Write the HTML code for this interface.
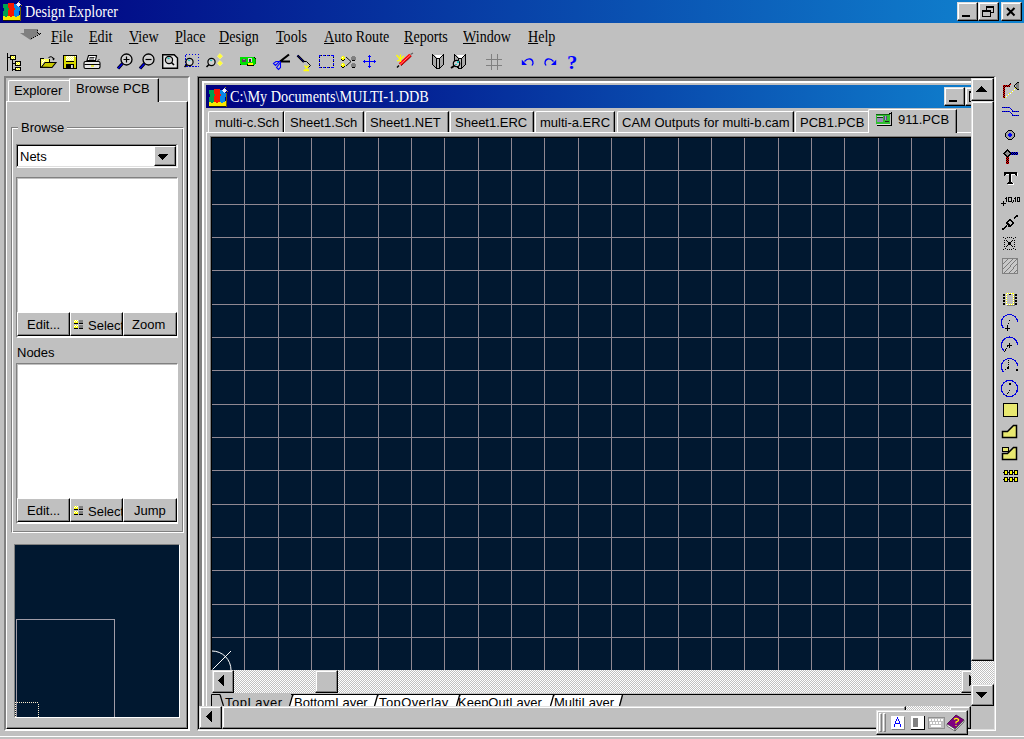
<!DOCTYPE html>
<html><head><meta charset="utf-8">
<style>
*{margin:0;padding:0;box-sizing:border-box}
html,body{width:1024px;height:739px;overflow:hidden;background:#c0c0c0;font-family:"Liberation Sans",sans-serif;font-size:13px;color:#000;position:relative}
.a{position:absolute}
.sf{font-family:"Liberation Serif",serif}
.btn{position:absolute;background:#c0c0c0;border-top:1px solid #fff;border-left:1px solid #fff;border-right:1px solid #000;border-bottom:1px solid #000;box-shadow:inset -1px -1px #808080}
.btn2{position:absolute;background:#c0c0c0;border-top:1px solid #dfdfdf;border-left:1px solid #dfdfdf;border-right:1px solid #000;border-bottom:1px solid #000;box-shadow:inset -1px -1px #808080, inset 1px 1px #fff}
.sunk{position:absolute;border-top:1px solid #808080;border-left:1px solid #808080;border-right:1px solid #fff;border-bottom:1px solid #fff;box-shadow:inset -1px -1px #dfdfdf, inset 1px 1px #000}
.t{position:absolute;white-space:nowrap;line-height:13px;font-size:13px}
.m{position:absolute;white-space:nowrap;line-height:16px;font-size:16px;font-family:"Liberation Serif",serif;transform:scaleX(0.88);transform-origin:0 0}
.m u{text-decoration:underline;text-decoration-thickness:1px;text-underline-offset:1px}
.dith{background-color:#fff;background-image:linear-gradient(45deg,#c0c0c0 25%,transparent 25%,transparent 75%,#c0c0c0 75%),linear-gradient(45deg,#c0c0c0 25%,transparent 25%,transparent 75%,#c0c0c0 75%);background-size:2px 2px;background-position:0 0,1px 1px}
svg{position:absolute;overflow:visible}
</style></head><body>
<!-- ===== TITLE BAR ===== -->
<div class="a" style="left:0;top:0;width:1024px;height:23px;background:linear-gradient(to right,#000080,#1084d0)"></div>
<svg style="left:3px;top:0px" width="20" height="22"><g shape-rendering="crispEdges">
<rect x="0" y="15" width="17" height="5" fill="#f8e800"/>
<rect x="0" y="4" width="5" height="12" fill="#00a050"/><rect x="0" y="8" width="1" height="3" fill="#000080"/><rect x="5" y="8" width="1" height="2" fill="#00a050"/>
<rect x="5" y="3" width="6" height="13" fill="#f81800"/><rect x="5" y="8" width="1" height="2" fill="#00a050"/><rect x="11" y="8" width="1" height="2" fill="#f81800"/>
<rect x="11" y="4" width="5" height="12" fill="#0888e8"/><rect x="11" y="8" width="1" height="2" fill="#f81800"/><rect x="16" y="7" width="1" height="4" fill="#0888e8"/>
<rect x="2" y="15" width="2" height="2" fill="#00a050"/><rect x="7" y="15" width="2" height="2" fill="#f81800"/><rect x="12" y="15" width="2" height="2" fill="#0888e8"/>
<rect x="0" y="20" width="17" height="1" fill="#202000"/><rect x="17" y="7" width="1" height="14" fill="#706000"/>
<rect x="15" y="2" width="1" height="5" fill="#d0d0f0"/><rect x="13" y="4" width="5" height="1" fill="#d0d0f0"/><rect x="14" y="3" width="3" height="3" fill="#f0f0ff"/>
<rect x="16" y="1" width="1" height="1" fill="#a09000"/><rect x="18" y="5" width="1" height="1" fill="#a09000"/>
</g></svg>
<div class="m" style="left:25px;top:3px;color:#fff;font-size:17px;line-height:17px;transform:scaleX(0.83)">Design Explorer</div>
<div class="btn2" style="left:957px;top:2px;width:21px;height:19px"></div>
<div class="btn2" style="left:978px;top:2px;width:21px;height:19px"></div>
<div class="btn2" style="left:1001px;top:2px;width:21px;height:19px"></div>
<svg style="left:957px;top:2px" width="65" height="19" shape-rendering="crispEdges"><g fill="#000">
<rect x="5" y="13" width="8" height="2"/>
<rect x="29" y="4" width="8" height="2"/><rect x="36" y="6" width="1" height="5"/><rect x="33" y="10" width="4" height="1"/><rect x="29" y="6" width="1" height="2"/>
<rect x="25" y="8" width="9" height="2"/><rect x="25" y="10" width="1" height="5"/><rect x="33" y="10" width="1" height="5"/><rect x="25" y="14" width="9" height="1"/>
</g><path d="M50 6l7.5 7.5M57.5 6L50 13.5" stroke="#000" stroke-width="2" shape-rendering="auto"/></svg>

<!-- ===== MENU ===== -->
<svg style="left:0;top:0" width="50" height="50"><path d="M24 29H38V33H41L30.5 40L20 33H24Z" fill="#808080"/>
<g fill="#000" shape-rendering="crispEdges"><rect x="37" y="30" width="1" height="1"/><rect x="37" y="32" width="1" height="1"/><rect x="38" y="33" width="1" height="1"/><rect x="39" y="34" width="1" height="1"/><rect x="40" y="33" width="1" height="1"/><rect x="37" y="35" width="1" height="1"/><rect x="35" y="36" width="1" height="1"/><rect x="33" y="37" width="1" height="1"/><rect x="31" y="38" width="1" height="1"/></g></svg>
<div class="m" style="left:51px;top:29px"><u>F</u>ile</div>
<div class="m" style="left:89px;top:29px"><u>E</u>dit</div>
<div class="m" style="left:129px;top:29px"><u>V</u>iew</div>
<div class="m" style="left:175px;top:29px"><u>P</u>lace</div>
<div class="m" style="left:219px;top:29px"><u>D</u>esign</div>
<div class="m" style="left:276px;top:29px"><u>T</u>ools</div>
<div class="m" style="left:324px;top:29px"><u>A</u>uto Route</div>
<div class="m" style="left:404px;top:29px"><u>R</u>eports</div>
<div class="m" style="left:463px;top:29px"><u>W</u>indow</div>
<div class="m" style="left:528px;top:29px"><u>H</u>elp</div>
<!-- ===== TOOLBAR ===== -->
<svg style="left:0;top:50px" width="600" height="24" shape-rendering="crispEdges">
<!-- tree icon -->
<g shape-rendering="crispEdges"><rect x="7" y="3" width="1" height="18" fill="#000"/><rect x="8" y="7" width="3" height="1" fill="#000"/><rect x="12" y="10" width="1" height="11" fill="#000"/><rect x="13" y="13" width="2" height="1" fill="#000"/><rect x="13" y="19" width="2" height="1" fill="#000"/><rect x="10" y="5" width="6" height="5" fill="#000"/><rect x="11" y="6" width="4" height="3" fill="#ffff00"/><rect x="12" y="6" width="1" height="1" fill="#ffffd0"/><rect x="14" y="6" width="1" height="1" fill="#ffffd0"/><rect x="11" y="7" width="1" height="1" fill="#ffffd0"/><rect x="13" y="7" width="1" height="1" fill="#ffffd0"/><rect x="12" y="8" width="1" height="1" fill="#ffffd0"/><rect x="14" y="8" width="1" height="1" fill="#ffffd0"/><rect x="15" y="11" width="6" height="5" fill="#000"/><rect x="16" y="12" width="4" height="3" fill="#ffff00"/><rect x="16" y="12" width="1" height="1" fill="#ffffd0"/><rect x="18" y="12" width="1" height="1" fill="#ffffd0"/><rect x="17" y="13" width="1" height="1" fill="#ffffd0"/><rect x="19" y="13" width="1" height="1" fill="#ffffd0"/><rect x="16" y="14" width="1" height="1" fill="#ffffd0"/><rect x="18" y="14" width="1" height="1" fill="#ffffd0"/><rect x="15" y="17" width="6" height="4" fill="#000"/><rect x="16" y="18" width="4" height="2" fill="#ffff00"/><rect x="16" y="18" width="1" height="1" fill="#ffffd0"/><rect x="18" y="18" width="1" height="1" fill="#ffffd0"/><rect x="17" y="19" width="1" height="1" fill="#ffffd0"/><rect x="19" y="19" width="1" height="1" fill="#ffffd0"/></g>
<!-- open folder -->
<g transform="translate(0,-50)" shape-rendering="crispEdges">
<path d="M40.5 58.5h3l1 1h5v3" fill="none" stroke="#000"/>
<rect x="41" y="59" width="8" height="8" fill="#ffff60"/>
<g fill="#fff"><rect x="42" y="60" width="1" height="1"/><rect x="44" y="60" width="1" height="1"/><rect x="43" y="61" width="1" height="1"/><rect x="42" y="62" width="1" height="1"/><rect x="44" y="62" width="1" height="1"/><rect x="43" y="63" width="1" height="1"/><rect x="42" y="64" width="1" height="1"/></g>
<rect x="40" y="58" width="1" height="10" fill="#000"/><rect x="40" y="67" width="12" height="1" fill="#000"/>
</g>
<g transform="translate(0,-50)" shape-rendering="auto">
<path d="M41.5 67L45 62.5H56L52 67.5Z" fill="#c8c800" stroke="#000" stroke-width="1.1"/>
<path d="M48.5 57.5q2.5-2 5 0.5v1.5" fill="none" stroke="#000" stroke-width="1"/>
<path d="M52 58.5h3l-1.5 2z" fill="#000"/>
</g>
<!-- save -->
<g transform="translate(0,-50)" shape-rendering="crispEdges">
<rect x="63" y="55" width="14" height="14" fill="#000"/>
<rect x="64" y="56" width="12" height="12" fill="#d8d800"/>
<rect x="66" y="56" width="8" height="5" fill="#ffff80"/>
<g fill="#fff"><rect x="67" y="56" width="1" height="1"/><rect x="69" y="56" width="1" height="1"/><rect x="71" y="56" width="1" height="1"/><rect x="73" y="56" width="1" height="1"/><rect x="66" y="57" width="1" height="1"/><rect x="68" y="57" width="1" height="1"/><rect x="70" y="57" width="1" height="1"/><rect x="72" y="57" width="1" height="1"/><rect x="67" y="58" width="1" height="1"/><rect x="69" y="58" width="1" height="1"/><rect x="71" y="58" width="1" height="1"/><rect x="73" y="58" width="1" height="1"/><rect x="66" y="59" width="1" height="1"/><rect x="68" y="59" width="1" height="1"/><rect x="70" y="59" width="1" height="1"/><rect x="72" y="59" width="1" height="1"/></g>
<rect x="66" y="61" width="8" height="1" fill="#000"/>
<rect x="66" y="64" width="8" height="5" fill="#000"/><rect x="72" y="65" width="1" height="3" fill="#c0c0c0"/><rect x="71" y="65" width="1" height="3" fill="#e0e0e0"/>
<rect x="75" y="56" width="1" height="1" fill="#fff"/>
</g>
<!-- printer -->
<g transform="translate(0,-50)" shape-rendering="auto">
<path d="M88.5 55.5h8l-1 5h-8.5z" fill="#fff" stroke="#000" stroke-width="1.1"/>
<path d="M89.5 57.5h5M89 59h5" stroke="#000" stroke-width="0.8"/>
<path d="M85.5 61.5h13q1.5 0 1.5 1.5v4q0 1.5-1.5 1.5h-13q-1.5 0-1.5-1.5v-4q0-1.5 1.5-1.5z" fill="#e8e8e8" stroke="#000" stroke-width="1.1"/>
<path d="M84.5 64.5h15.5" stroke="#000" stroke-width="1"/>
<path d="M91 66h3" stroke="#e0e000" stroke-width="1.3"/>
<path d="M97.5 61l2-2M98.5 68.5l1.5-1.5" stroke="#000" stroke-width="0.8"/>
</g>
<!-- zoom in 118..133 y54..70 -->
<g transform="translate(0,-50)" shape-rendering="auto">
<circle cx="126.5" cy="59.5" r="5.5" fill="#d0d0d0" stroke="#000" stroke-width="1.3"/>
<path d="M123.5 59.5h6M126.5 56.5v6" stroke="#000" stroke-width="1.2"/>
<path d="M122.5 63.5l-4.5 5" stroke="#000" stroke-width="3.2"/><path d="M122.3 63.7l-4.3 4.8" stroke="#0000e0" stroke-width="1.6"/>
<circle cx="148.5" cy="59.5" r="5.5" fill="#d0d0d0" stroke="#000" stroke-width="1.3"/>
<path d="M145.5 59.5h6" stroke="#000" stroke-width="1.2"/>
<path d="M144.5 63.5l-4.5 5" stroke="#000" stroke-width="3.2"/><path d="M144.3 63.7l-4.3 4.8" stroke="#0000e0" stroke-width="1.6"/>
</g>
<!-- zoom doc 162..178 y54..68 -->
<g transform="translate(0,-50)" shape-rendering="auto">
<path d="M162.7 54.7h11.5l3.3 3.3v10.3h-14.8z" fill="#e4e4e4" stroke="#000" stroke-width="1.4"/>
<circle cx="169" cy="60" r="3.6" fill="#d0d0d0" stroke="#000" stroke-width="1.2"/>
<path d="M167.5 58.3a2 2 0 0 1 2 0.5" stroke="#20c0c0" stroke-width="1.4" fill="none"/>
<path d="M171.5 62.5l2.5 2.5" stroke="#000" stroke-width="1.6"/>
</g>
<!-- zoom area 184..199 -->
<g transform="translate(0,-50)" shape-rendering="auto">
<rect x="185.5" y="54.5" width="13" height="12" fill="none" stroke="#0000e0" stroke-dasharray="1.5 1.5" shape-rendering="crispEdges"/>
<circle cx="189.5" cy="62" r="3.6" fill="#d0d0d0" stroke="#000" stroke-width="1.2"/>
<path d="M188 60.3a2 2 0 0 1 2 0.5" stroke="#20c0c0" stroke-width="1.4" fill="none"/>
<path d="M187 64.5l-2.5 2.5" stroke="#000" stroke-width="1.6"/>
</g>
<!-- zoom selected 206..223 -->
<g transform="translate(0,-50)" shape-rendering="auto">
<circle cx="211.5" cy="62" r="3.6" fill="#d0d0d0" stroke="#000" stroke-width="1.2"/>
<path d="M210 60.3a2 2 0 0 1 2 0.5" stroke="#20c0c0" stroke-width="1.4" fill="none"/>
<path d="M209 64.5l-2.5 2.5" stroke="#000" stroke-width="1.6"/>
<path d="M220 53.5l2.7 2.7-2.7 2.7-2.7-2.7zM220 60.5l2.7 2.7-2.7 2.7-2.7-2.7z" fill="#ffff30" stroke="#fff8a0" stroke-width="0.6"/>
</g>
<!-- green pcb -->
<g shape-rendering="crispEdges"><rect x="240" y="7" width="15" height="8" fill="#00e000"/><rect x="240" y="14" width="15" height="0" fill="#000"/><rect x="242" y="9" width="4" height="3" fill="#604060"/><rect x="243" y="9" width="2" height="1" fill="#a080a0"/><rect x="248" y="8" width="4" height="4" fill="#e0d0e0"/><rect x="249" y="9" width="2" height="3" fill="#303030"/><rect x="248" y="13" width="5" height="2" fill="#ffff00"/><rect x="247" y="15" width="7" height="1" fill="#000"/><rect x="247" y="14" width="1" height="1" fill="#000"/><rect x="240" y="14" width="1" height="1" fill="#000"/><rect x="254" y="7" width="1" height="1" fill="#000"/><rect x="255" y="8" width="1" height="1" fill="#000"/><rect x="255" y="9" width="1" height="5" fill="#00a000"/></g>
<!-- scissors 273..290 y54..70 -->
<g transform="translate(0,-50)" shape-rendering="auto">
<path d="M280 61.5L289 54.5M280 61.5H290" stroke="#000" stroke-width="2.2" fill="none"/>
<path d="M273.5 63.5L276 61.5H279.5L275.5 65.5Z" fill="none" stroke="#0000ff" stroke-width="1.1"/>
<path d="M276.5 67.5L280.5 62.5V67.5L278.5 69.5Z" fill="none" stroke="#0000ff" stroke-width="1.1"/>
</g>
<!-- paste brush 297..311 -->
<g transform="translate(0,-50)" shape-rendering="auto">
<path d="M297.5 55.5L304 62" stroke="#000" stroke-width="2.4"/><path d="M297.5 55.5L304 62" stroke="#0000d0" stroke-width="1" stroke-dasharray="1.2 0.6"/>
<path d="M304 61.5H306.5L310.5 65.5L308.5 67.5" fill="none" stroke="#000" stroke-width="1"/>
<path d="M304.5 65.5L308.5 70.5M308.5 65.5L304.5 70.5M303.5 70.5H309" stroke="#ffff00" stroke-width="1.3"/>
</g>
<!-- dotted box / deselect / move -->
<g shape-rendering="crispEdges"><rect x="319" y="5" width="1" height="1" fill="#0000ff"/><rect x="319" y="17" width="1" height="1" fill="#0000ff"/><rect x="320" y="5" width="1" height="1" fill="#0000ff"/><rect x="320" y="17" width="1" height="1" fill="#0000ff"/><rect x="321" y="5" width="1" height="1" fill="#000"/><rect x="321" y="17" width="1" height="1" fill="#000"/><rect x="323" y="5" width="1" height="1" fill="#0000ff"/><rect x="323" y="17" width="1" height="1" fill="#0000ff"/><rect x="324" y="5" width="1" height="1" fill="#0000ff"/><rect x="324" y="17" width="1" height="1" fill="#0000ff"/><rect x="325" y="5" width="1" height="1" fill="#000"/><rect x="325" y="17" width="1" height="1" fill="#000"/><rect x="327" y="5" width="1" height="1" fill="#0000ff"/><rect x="327" y="17" width="1" height="1" fill="#0000ff"/><rect x="328" y="5" width="1" height="1" fill="#0000ff"/><rect x="328" y="17" width="1" height="1" fill="#0000ff"/><rect x="329" y="5" width="1" height="1" fill="#000"/><rect x="329" y="17" width="1" height="1" fill="#000"/><rect x="331" y="5" width="1" height="1" fill="#0000ff"/><rect x="331" y="17" width="1" height="1" fill="#0000ff"/><rect x="332" y="5" width="1" height="1" fill="#0000ff"/><rect x="332" y="17" width="1" height="1" fill="#0000ff"/><rect x="333" y="5" width="1" height="1" fill="#000"/><rect x="333" y="17" width="1" height="1" fill="#000"/><rect x="319" y="5" width="1" height="1" fill="#0000ff"/><rect x="333" y="5" width="1" height="1" fill="#0000ff"/><rect x="319" y="6" width="1" height="1" fill="#0000ff"/><rect x="333" y="6" width="1" height="1" fill="#0000ff"/><rect x="319" y="7" width="1" height="1" fill="#000"/><rect x="333" y="7" width="1" height="1" fill="#000"/><rect x="319" y="9" width="1" height="1" fill="#0000ff"/><rect x="333" y="9" width="1" height="1" fill="#0000ff"/><rect x="319" y="10" width="1" height="1" fill="#0000ff"/><rect x="333" y="10" width="1" height="1" fill="#0000ff"/><rect x="319" y="11" width="1" height="1" fill="#000"/><rect x="333" y="11" width="1" height="1" fill="#000"/><rect x="319" y="13" width="1" height="1" fill="#0000ff"/><rect x="333" y="13" width="1" height="1" fill="#0000ff"/><rect x="319" y="14" width="1" height="1" fill="#0000ff"/><rect x="333" y="14" width="1" height="1" fill="#0000ff"/><rect x="319" y="15" width="1" height="1" fill="#000"/><rect x="333" y="15" width="1" height="1" fill="#000"/><rect x="319" y="17" width="1" height="1" fill="#0000ff"/><rect x="333" y="17" width="1" height="1" fill="#0000ff"/><rect x="341" y="7" width="4" height="3" fill="#ffff00"/><rect x="342" y="6" width="2" height="1" fill="#ffff00"/><rect x="342" y="10" width="2" height="1" fill="#000"/><rect x="341" y="9" width="1" height="1" fill="#000"/><rect x="344" y="9" width="1" height="1" fill="#000"/><rect x="342" y="7" width="1" height="1" fill="#fff"/><rect x="352" y="6" width="3" height="5" fill="#808080"/><rect x="351" y="7" width="5" height="3" fill="#808080"/><rect x="352" y="10" width="3" height="1" fill="#000"/><rect x="341" y="14" width="4" height="3" fill="#ffff00"/><rect x="342" y="13" width="2" height="1" fill="#ffff00"/><rect x="342" y="17" width="2" height="1" fill="#000"/><rect x="341" y="16" width="1" height="1" fill="#000"/><rect x="344" y="16" width="1" height="1" fill="#000"/><rect x="342" y="14" width="1" height="1" fill="#fff"/><rect x="352" y="13" width="3" height="5" fill="#808080"/><rect x="351" y="14" width="5" height="3" fill="#808080"/><rect x="352" y="17" width="3" height="1" fill="#000"/></g><g transform="translate(0,-50)" shape-rendering="auto"><path d="M346 57l5 4.5-5 4.5" fill="none" stroke="#000" stroke-width="0.9"/></g>
<!-- move cross 363..376 y55..68 -->
<g transform="translate(0,-50)" shape-rendering="crispEdges">
<rect x="363" y="61" width="13" height="1" fill="#0000ff"/><rect x="369" y="55" width="1" height="13" fill="#0000ff"/>
<rect x="368" y="56" width="3" height="1" fill="#0000ff"/><rect x="368" y="66" width="3" height="1" fill="#0000ff"/>
<rect x="364" y="60" width="1" height="3" fill="#0000ff"/><rect x="374" y="60" width="1" height="3" fill="#0000ff"/>
</g>
<!-- pencil 396..412 y53..68 -->
<g transform="translate(0,-50)" shape-rendering="auto">
<path d="M400 64.5L410.5 55" stroke="#ff0000" stroke-width="3.6"/>
<path d="M400 64.5L410.5 55" stroke="#fff" stroke-width="1" stroke-dasharray="0.7 0.7"/>
<path d="M401.2 65.7L411.2 56.5" stroke="#000" stroke-width="0.9" stroke-dasharray="0.8 0.8"/>
<path d="M397 67.5L399 65.5" stroke="#000" stroke-width="1.4"/>
<path d="M410.5 54.5l2.5-1.5" stroke="#606060" stroke-width="1.2"/>
<path d="M400.5 59.5L396.5 55M400.5 59.5V54.5M400.5 59.5L404 56M400.5 59.5L397 61M400.5 59.5V62" stroke="#ffff00" stroke-width="1.3"/>
</g>
<!-- library 432..444 y54..68 -->
<g transform="translate(432,4)">
<path d="M0.5 0.5V10.5L4.5 14.5H7.5L11.5 10.5V0.5L7.5 4.5H4.5Z" fill="#a8a8a8" stroke="#000" stroke-width="1.3"/>
<path d="M1.5 0.5H10.5L7 4H5Z" fill="#fff"/>
<rect x="4.5" y="4.5" width="3" height="10" fill="#b8b8b8" stroke="#000" stroke-width="1.3"/>
</g>
<g transform="translate(454,4)">
<path d="M0.5 0.5V10.5L4.5 14.5H7.5L11.5 10.5V0.5L7.5 4.5H4.5Z" fill="#a8a8a8" stroke="#000" stroke-width="1.3"/>
<path d="M1.5 0.5H10.5L7 4H5Z" fill="#fff"/>
<rect x="4.5" y="4.5" width="3" height="10" fill="#b8b8b8" stroke="#000" stroke-width="1.3"/>
<circle cx="2.5" cy="9.5" r="3.2" fill="#d0d0d0" stroke="#000" stroke-width="1.2" shape-rendering="auto"/>
<rect x="3" y="7" width="2" height="2" fill="#20c0c0"/><rect x="1" y="10" width="2" height="1" fill="#20c0c0"/>
<path d="M0 12l-3 2" stroke="#000" stroke-width="2" shape-rendering="auto"/>
</g>
<!-- grid 486..502 y54..70 -->
<g transform="translate(486,4)">
<rect x="5" y="0" width="1" height="16" fill="#808080"/><rect x="11" y="0" width="1" height="16" fill="#808080"/>
<rect x="0" y="5" width="16" height="1" fill="#808080"/><rect x="0" y="11" width="16" height="1" fill="#808080"/>
</g>
<!-- undo/redo/help -->
<g transform="translate(0,-50)" shape-rendering="auto">
<path d="M524.5 61.5Q527 58.5 530 59T533 63.5L532 65.5" fill="none" stroke="#0000ff" stroke-width="1.3"/>
<path d="M521.8 59.7V65H527Z" fill="#0000ff"/>
<path d="M553.5 61.5Q551 58.5 548 59T545 63.5L546 65.5" fill="none" stroke="#0000ff" stroke-width="1.3"/>
<path d="M556.2 59.7V65H551Z" fill="#0000ff"/>
</g>
<text x="567" y="19" font-family="Liberation Serif" font-weight="bold" font-size="18" fill="#0000ff" transform="translate(567,0) scale(1.15,1) translate(-567,0)">?</text>
</svg>
<!-- ===== LEFT PANEL ===== -->
<div class="a" style="left:4px;top:76px;width:186px;height:655px;border-top:2px solid #808080;border-left:2px solid #808080;border-right:2px solid #fff;border-bottom:2px solid #fff"></div>
<div class="a" style="left:6px;top:101px;width:182px;height:628px;border-top:1px solid #fff;border-left:1px solid #fff;border-right:1px solid #000;border-bottom:1px solid #000;box-shadow:inset -1px -1px #808080"></div>
<!-- inactive tab Explorer -->
<div class="a" style="left:8px;top:80px;width:61px;height:21px;border-top:1px solid #fff;border-left:1px solid #fff;border-top-left-radius:2px"></div>
<div class="t" style="left:14px;top:84px">Explorer</div>
<!-- active tab Browse PCB -->
<div class="a" style="left:69px;top:78px;width:90px;height:24px;background:#c0c0c0;border-top:1px solid #fff;border-left:1px solid #fff;border-right:1px solid #000;box-shadow:inset -1px 0 #808080;border-top-left-radius:2px;border-top-right-radius:1px"></div>
<div class="t" style="left:76px;top:82px">Browse PCB</div>

<!-- group box Browse -->
<div class="a" style="left:11px;top:127px;width:173px;height:406px;border-top:1px solid #808080;border-left:1px solid #808080;border-right:1px solid #fff;border-bottom:1px solid #fff;box-shadow:inset 1px 1px #fff, inset -1px -1px #808080"></div>
<div class="t" style="left:18px;top:121px;background:#c0c0c0;padding:0 3px 0 3px">Browse</div>
<!-- combo -->
<div class="sunk" style="left:16px;top:144px;width:162px;height:24px;background:#fff"></div>
<div class="t" style="left:20px;top:150px">Nets</div>
<div class="btn" style="left:154px;top:146px;width:22px;height:20px"></div>
<svg style="left:0;top:0" width="200" height="200" shape-rendering="crispEdges"><path d="M159 154h9v1h-1v1h-1v1h-1v1h-1v1h-1v1h-1v-1h-1v-1h-1v-1h-1v-1h-1z" fill="#000"/></svg>
<!-- listbox 1 -->
<div class="a" style="left:16px;top:177px;width:162px;height:161px;background:#fff;border-top:1px solid #808080;border-left:1px solid #808080;border-right:1px solid #fff;border-bottom:1px solid #fff;box-shadow:inset 1px 1px #c0c0c0"></div>
<div class="btn" style="left:17px;top:312px;width:53px;height:24px"></div>
<div class="btn" style="left:70px;top:312px;width:53px;height:24px"></div>
<div class="btn" style="left:123px;top:312px;width:54px;height:24px"></div>
<div class="t" style="left:27px;top:318px">Edit...</div>
<div class="a" style="left:71px;top:313px;width:51px;height:23px;overflow:hidden"><div class="t" style="left:17px;top:6px">Select</div></div>
<svg style="left:0;top:0" width="100" height="739" shape-rendering="crispEdges"><rect x="74" y="320" width="4" height="3" fill="#ffff00"/><rect x="75" y="320" width="1" height="1" fill="#fff"/><rect x="77" y="320" width="1" height="1" fill="#fff"/><rect x="74" y="321" width="1" height="1" fill="#fff"/><rect x="76" y="321" width="1" height="1" fill="#fff"/><rect x="74" y="323" width="4" height="1" fill="#000"/><rect x="79" y="320" width="4" height="3" fill="#808080"/><rect x="79" y="323" width="4" height="1" fill="#000"/><rect x="74" y="325" width="4" height="3" fill="#ffff00"/><rect x="75" y="325" width="1" height="1" fill="#fff"/><rect x="77" y="325" width="1" height="1" fill="#fff"/><rect x="74" y="326" width="1" height="1" fill="#fff"/><rect x="76" y="326" width="1" height="1" fill="#fff"/><rect x="74" y="328" width="4" height="1" fill="#000"/><rect x="79" y="325" width="4" height="3" fill="#808080"/><rect x="79" y="328" width="4" height="1" fill="#000"/></svg>
<div class="t" style="left:132px;top:318px">Zoom</div>
<div class="t" style="left:17px;top:346px">Nodes</div>
<div class="a" style="left:16px;top:363px;width:162px;height:161px;background:#fff;border-top:1px solid #808080;border-left:1px solid #808080;border-right:1px solid #fff;border-bottom:1px solid #fff;box-shadow:inset 1px 1px #c0c0c0"></div>
<div class="btn" style="left:17px;top:498px;width:53px;height:24px"></div>
<div class="btn" style="left:70px;top:498px;width:53px;height:24px"></div>
<div class="btn" style="left:123px;top:498px;width:54px;height:24px"></div>
<div class="t" style="left:27px;top:504px">Edit...</div>
<div class="a" style="left:71px;top:499px;width:51px;height:23px;overflow:hidden"><div class="t" style="left:17px;top:6px">Select</div></div>
<svg style="left:0;top:0" width="100" height="739" shape-rendering="crispEdges"><rect x="74" y="506" width="4" height="3" fill="#ffff00"/><rect x="75" y="506" width="1" height="1" fill="#fff"/><rect x="77" y="506" width="1" height="1" fill="#fff"/><rect x="74" y="507" width="1" height="1" fill="#fff"/><rect x="76" y="507" width="1" height="1" fill="#fff"/><rect x="74" y="509" width="4" height="1" fill="#000"/><rect x="79" y="506" width="4" height="3" fill="#808080"/><rect x="79" y="509" width="4" height="1" fill="#000"/><rect x="74" y="511" width="4" height="3" fill="#ffff00"/><rect x="75" y="511" width="1" height="1" fill="#fff"/><rect x="77" y="511" width="1" height="1" fill="#fff"/><rect x="74" y="512" width="1" height="1" fill="#fff"/><rect x="76" y="512" width="1" height="1" fill="#fff"/><rect x="74" y="514" width="4" height="1" fill="#000"/><rect x="79" y="511" width="4" height="3" fill="#808080"/><rect x="79" y="514" width="4" height="1" fill="#000"/></svg>
<div class="t" style="left:134px;top:504px">Jump</div>
<!-- minimap -->
<div class="a" style="left:14px;top:544px;width:166px;height:174px;background:#011830;border-top:1px solid #808080;border-left:1px solid #808080;border-right:1px solid #fff;border-bottom:1px solid #fff"></div>
<svg style="left:0;top:0" width="200" height="739" shape-rendering="crispEdges">
<path d="M16.5 717V619.5H114.5V717" fill="none" stroke="#a09ca8"/>
<path d="M15.5 717V702.5H37.5l1 1V717" fill="none" stroke="#fff0d0" stroke-dasharray="1 1"/>
</svg>
<!-- ===== MDI ===== -->
<div class="a" style="left:197px;top:76px;width:799px;height:655px;border-top:1px solid #808080;border-left:1px solid #808080;border-right:1px solid #fff;border-bottom:1px solid #fff;box-shadow:inset -1px -1px #dfdfdf, inset 1px 1px #000"></div>
<div class="a" style="left:0;top:0;width:1024px;height:739px;clip-path:inset(78px 30px 10px 199px)">
<!-- child frame -->
<div class="a" style="left:199px;top:78px;width:800px;height:700px;border-top:3px solid #808080;border-left:3px solid #808080;box-shadow:inset 2px 2px #fff"></div>
<!-- doc title -->
<div class="a" style="left:206px;top:85px;width:804px;height:23px;background:linear-gradient(to right,#000080,#1084d0)"></div>
<svg style="left:209px;top:86px" width="20" height="22"><g shape-rendering="crispEdges">
<rect x="0" y="15" width="17" height="5" fill="#f8e800"/>
<rect x="0" y="4" width="5" height="12" fill="#00a050"/><rect x="0" y="8" width="1" height="3" fill="#000080"/><rect x="5" y="8" width="1" height="2" fill="#00a050"/>
<rect x="5" y="3" width="6" height="13" fill="#f81800"/><rect x="5" y="8" width="1" height="2" fill="#00a050"/><rect x="11" y="8" width="1" height="2" fill="#f81800"/>
<rect x="11" y="4" width="5" height="12" fill="#0888e8"/><rect x="11" y="8" width="1" height="2" fill="#f81800"/><rect x="16" y="7" width="1" height="4" fill="#0888e8"/>
<rect x="2" y="15" width="2" height="2" fill="#00a050"/><rect x="7" y="15" width="2" height="2" fill="#f81800"/><rect x="12" y="15" width="2" height="2" fill="#0888e8"/>
<rect x="0" y="20" width="17" height="1" fill="#202000"/><rect x="17" y="7" width="1" height="14" fill="#706000"/>
<rect x="15" y="2" width="1" height="5" fill="#d0d0f0"/><rect x="13" y="4" width="5" height="1" fill="#d0d0f0"/><rect x="14" y="3" width="3" height="3" fill="#f0f0ff"/>
<rect x="16" y="1" width="1" height="1" fill="#a09000"/><rect x="18" y="5" width="1" height="1" fill="#a09000"/>
</g></svg>
<div class="m" style="left:230px;top:89px;color:#fff;font-size:16px;line-height:16px;transform:scaleX(0.89)">C:\My Documents\MULTI-1.DDB</div>
<div class="btn2" style="left:944px;top:87px;width:21px;height:19px"></div>
<div class="btn2" style="left:965px;top:87px;width:21px;height:19px"></div>
<svg style="left:944px;top:87px" width="30" height="19" shape-rendering="crispEdges"><rect x="5" y="13" width="8" height="2" fill="#000"/><rect x="25" y="4" width="1" height="11" fill="#000"/><rect x="25" y="4" width="5" height="2" fill="#000"/><rect x="25" y="14" width="5" height="1" fill="#000"/></svg>

<!-- doc tabs -->
<div class="a" style="left:206px;top:132px;width:765px;height:1px;background:#fff"></div>
<div class="a" style="left:206px;top:132px;width:1px;height:600px;background:#fff"></div>
<div class="a" style="left:208px;top:111px;width:76px;height:21px;border-top:1px solid #fff;border-left:1px solid #fff;border-right:1px solid #000;box-shadow:inset -1px 0 #808080;border-top-left-radius:2px"></div>
<div class="t" style="left:215px;top:116px">multi-c.Sch</div>
<div class="a" style="left:284px;top:111px;width:80px;height:21px;border-top:1px solid #fff;border-left:1px solid #fff;border-right:1px solid #000;box-shadow:inset -1px 0 #808080;border-top-left-radius:2px"></div>
<div class="t" style="left:290px;top:116px">Sheet1.Sch</div>
<div class="a" style="left:365px;top:111px;width:84px;height:21px;border-top:1px solid #fff;border-left:1px solid #fff;border-right:1px solid #000;box-shadow:inset -1px 0 #808080;border-top-left-radius:2px"></div>
<div class="t" style="left:370px;top:116px">Sheet1.NET</div>
<div class="a" style="left:450px;top:111px;width:84px;height:21px;border-top:1px solid #fff;border-left:1px solid #fff;border-right:1px solid #000;box-shadow:inset -1px 0 #808080;border-top-left-radius:2px"></div>
<div class="t" style="left:455px;top:116px">Sheet1.ERC</div>
<div class="a" style="left:535px;top:111px;width:80px;height:21px;border-top:1px solid #fff;border-left:1px solid #fff;border-right:1px solid #000;box-shadow:inset -1px 0 #808080;border-top-left-radius:2px"></div>
<div class="t" style="left:540px;top:116px">multi-a.ERC</div>
<div class="a" style="left:617px;top:111px;width:177px;height:21px;border-top:1px solid #fff;border-left:1px solid #fff;border-right:1px solid #000;box-shadow:inset -1px 0 #808080;border-top-left-radius:2px"></div>
<div class="t" style="left:622px;top:116px">CAM Outputs for multi-b.cam</div>
<div class="a" style="left:795px;top:111px;width:75px;height:21px;border-top:1px solid #fff;border-left:1px solid #fff;border-right:1px solid #000;box-shadow:inset -1px 0 #808080;border-top-left-radius:2px"></div>
<div class="t" style="left:800px;top:116px">PCB1.PCB</div>
<div class="a" style="left:868px;top:109px;width:89px;height:24px;background:#c0c0c0;border-top:1px solid #fff;border-left:1px solid #fff;border-right:1px solid #000;box-shadow:inset -1px 0 #808080;border-top-left-radius:2px"></div>
<svg style="left:0;top:0" width="1024" height="200" shape-rendering="crispEdges">
<rect x="876" y="114" width="14" height="10" fill="#30c030"/><rect x="876" y="114" width="14" height="1" fill="#106010"/>
<rect x="877" y="116" width="6" height="1" fill="#d0c8d8"/>
<rect x="877" y="118" width="6" height="4" fill="#9888b8"/><rect x="877" y="117" width="6" height="1" fill="#104010"/>
<rect x="884" y="116" width="1" height="4" fill="#5a4a80"/><rect x="886" y="116" width="1" height="4" fill="#5a4a80"/><rect x="885" y="116" width="1" height="4" fill="#a898c8"/>
<rect x="885" y="121" width="4" height="1" fill="#202020"/>
<rect x="877" y="124" width="13" height="1" fill="#e8e0e8"/>
<rect x="877" y="125" width="15" height="1" fill="#000"/><rect x="891" y="112" width="1" height="14" fill="#000"/>
<rect x="889" y="113" width="2" height="1" fill="#000"/>
</svg>
<div class="t" style="left:898px;top:113px">911.PCB</div>

<!-- canvas -->
<div class="a" style="left:210px;top:136px;width:761px;height:534px;background:#011830;border-top:1px solid #808080;border-left:1px solid #808080;box-shadow:inset 1px 1px #000"></div>
<svg style="left:0;top:0" width="1024" height="739" shape-rendering="crispEdges">
<g fill="#908892">
<rect x="244" y="138" width="1" height="532"/>
<rect x="278" y="138" width="1" height="532"/>
<rect x="311" y="138" width="1" height="532"/>
<rect x="344" y="138" width="1" height="532"/>
<rect x="378" y="138" width="1" height="532"/>
<rect x="411" y="138" width="1" height="532"/>
<rect x="444" y="138" width="1" height="532"/>
<rect x="478" y="138" width="1" height="532"/>
<rect x="511" y="138" width="1" height="532"/>
<rect x="544" y="138" width="1" height="532"/>
<rect x="578" y="138" width="1" height="532"/>
<rect x="611" y="138" width="1" height="532"/>
<rect x="644" y="138" width="1" height="532"/>
<rect x="678" y="138" width="1" height="532"/>
<rect x="711" y="138" width="1" height="532"/>
<rect x="744" y="138" width="1" height="532"/>
<rect x="778" y="138" width="1" height="532"/>
<rect x="811" y="138" width="1" height="532"/>
<rect x="844" y="138" width="1" height="532"/>
<rect x="878" y="138" width="1" height="532"/>
<rect x="911" y="138" width="1" height="532"/>
<rect x="944" y="138" width="1" height="532"/>
<rect x="212" y="170" width="759" height="1"/>
<rect x="212" y="204" width="759" height="1"/>
<rect x="212" y="237" width="759" height="1"/>
<rect x="212" y="270" width="759" height="1"/>
<rect x="212" y="304" width="759" height="1"/>
<rect x="212" y="337" width="759" height="1"/>
<rect x="212" y="370" width="759" height="1"/>
<rect x="212" y="404" width="759" height="1"/>
<rect x="212" y="437" width="759" height="1"/>
<rect x="212" y="470" width="759" height="1"/>
<rect x="212" y="504" width="759" height="1"/>
<rect x="212" y="537" width="759" height="1"/>
<rect x="212" y="570" width="759" height="1"/>
<rect x="212" y="604" width="759" height="1"/>
<rect x="212" y="637" width="759" height="1"/>
</g>
<path d="M212 651A19 19 0 0 1 231 670M212.5 669.5l18.5-18.5" fill="none" stroke="#fff" shape-rendering="auto"/>
</svg>
<!-- doc h-scrollbar -->
<div class="a dith" style="left:212px;top:670px;width:759px;height:24px"></div>
<div class="btn2" style="left:212px;top:670px;width:22px;height:23px"></div>

<div class="btn2" style="left:315px;top:670px;width:23px;height:23px"></div>
<div class="btn2" style="left:961px;top:670px;width:22px;height:23px"></div>
<svg style="left:0;top:0" width="1024" height="739" shape-rendering="crispEdges"><g fill="#000"><rect x="974" y="680" width="1" height="1"/><rect x="973" y="679" width="1" height="3"/><rect x="972" y="678" width="1" height="5"/><rect x="971" y="677" width="1" height="7"/><rect x="970" y="676" width="1" height="9"/><rect x="969" y="675" width="1" height="11"/></g></svg>

<!-- layer tabs -->
<div class="a" style="left:211px;top:693px;width:760px;height:14px;background:#c0c0c0"></div>
<svg style="left:0;top:0" width="1024" height="739">
<path d="M289 706L292 694.5H622L619 706z" fill="#fff"/>
<path d="M211.5 706V694.5H220" fill="none" stroke="#000"/>
<path d="M220 694.5L223.5 706" fill="none" stroke="#000" stroke-width="1.2"/>
<path d="M291 694.5H971" fill="none" stroke="#000"/>
<g stroke="#000" stroke-width="1.3" fill="none">
<path d="M289.5 706L292.5 695.5l1 0"/><path d="M374.5 706L377.5 695.5l1 0"/><path d="M456.5 706L459.5 695.5l1 0"/><path d="M550.5 706L553.5 695.5l1 0"/><path d="M619.5 706L622.5 695"/>
</g>
</svg>
<div class="a" style="left:211px;top:695px;width:760px;height:11px;overflow:hidden">
<div class="t" style="left:14px;top:1px;letter-spacing:0.5px">TopLayer</div>
<div class="t" style="left:83px;top:1px">BottomLayer</div>
<div class="t" style="left:168px;top:1px;letter-spacing:0.4px">TopOverlay</div>
<div class="t" style="left:247px;top:1px">KeepOutLayer</div>
<div class="t" style="left:343px;top:1px">MultiLayer</div>
</div>
<!-- MDI v-scrollbar -->
<div class="a dith" style="left:971px;top:78px;width:23px;height:628px"></div>
<div class="btn2" style="left:971px;top:78px;width:23px;height:23px"></div>

<div class="btn2" style="left:971px;top:101px;width:23px;height:560px"></div>
<div class="btn2" style="left:971px;top:684px;width:23px;height:22px"></div>

<!-- MDI h-scrollbar -->
<div class="a dith" style="left:199px;top:706px;width:772px;height:23px"></div>
<div class="btn2" style="left:199px;top:706px;width:23px;height:23px"></div>

<div class="btn2" style="left:222px;top:706px;width:684px;height:23px"></div>
<div class="btn2" style="left:949px;top:706px;width:22px;height:23px"></div>
<div class="a" style="left:971px;top:706px;width:23px;height:23px;background:#c0c0c0"></div>
<svg style="left:0;top:0" width="1024" height="739" shape-rendering="crispEdges"><g fill="#000"><rect x="218" y="680" width="1" height="1"/><rect x="219" y="679" width="1" height="3"/><rect x="220" y="678" width="1" height="5"/><rect x="221" y="677" width="1" height="7"/><rect x="222" y="676" width="1" height="9"/><rect x="223" y="675" width="1" height="11"/><rect x="206" y="716" width="1" height="1"/><rect x="207" y="715" width="1" height="3"/><rect x="208" y="714" width="1" height="5"/><rect x="209" y="713" width="1" height="7"/><rect x="210" y="712" width="1" height="9"/><rect x="211" y="711" width="1" height="11"/><rect x="981" y="86" width="1" height="1"/><rect x="980" y="87" width="3" height="1"/><rect x="979" y="88" width="5" height="1"/><rect x="978" y="89" width="7" height="1"/><rect x="977" y="90" width="9" height="1"/><rect x="976" y="91" width="11" height="1"/><rect x="981" y="697" width="1" height="1"/><rect x="980" y="696" width="3" height="1"/><rect x="979" y="695" width="5" height="1"/><rect x="978" y="694" width="7" height="1"/><rect x="977" y="693" width="9" height="1"/><rect x="976" y="692" width="11" height="1"/></g></svg>
</div>
<!-- bottom line -->
<div class="a" style="left:0;top:736px;width:1024px;height:1px;background:#fff"></div>
<!-- ===== RIGHT TOOLBAR ===== -->
<svg style="left:996px;top:76px" width="28" height="420">
<g shape-rendering="crispEdges">
<!-- route + diff -->
<g shape-rendering="crispEdges"><rect x="7" y="9" width="1" height="1" fill="#ff0000"/><rect x="8" y="9" width="1" height="1" fill="#000"/><rect x="7" y="10" width="1" height="1" fill="#000"/><rect x="8" y="10" width="1" height="1" fill="#ff0000"/><rect x="7" y="11" width="1" height="1" fill="#ff0000"/><rect x="8" y="11" width="1" height="1" fill="#000"/><rect x="7" y="12" width="1" height="1" fill="#000"/><rect x="8" y="12" width="1" height="1" fill="#ff0000"/><rect x="7" y="13" width="1" height="1" fill="#ff0000"/><rect x="8" y="13" width="1" height="1" fill="#000"/><rect x="7" y="14" width="1" height="1" fill="#000"/><rect x="8" y="14" width="1" height="1" fill="#ff0000"/><rect x="7" y="15" width="1" height="1" fill="#ff0000"/><rect x="8" y="15" width="1" height="1" fill="#000"/><rect x="7" y="16" width="1" height="1" fill="#000"/><rect x="8" y="16" width="1" height="1" fill="#ff0000"/><rect x="7" y="17" width="1" height="1" fill="#ff0000"/><rect x="8" y="17" width="1" height="1" fill="#000"/><rect x="7" y="18" width="1" height="1" fill="#000"/><rect x="8" y="18" width="1" height="1" fill="#ff0000"/><rect x="7" y="19" width="1" height="1" fill="#ff0000"/><rect x="8" y="19" width="1" height="1" fill="#000"/><rect x="7" y="20" width="1" height="1" fill="#000"/><rect x="8" y="20" width="1" height="1" fill="#ff0000"/><rect x="7" y="21" width="1" height="1" fill="#ff0000"/><rect x="8" y="21" width="1" height="1" fill="#000"/><rect x="9" y="9" width="1" height="1" fill="#ff0000"/><rect x="9" y="10" width="1" height="1" fill="#000"/><rect x="10" y="9" width="1" height="1" fill="#000"/><rect x="10" y="10" width="1" height="1" fill="#ff0000"/><rect x="11" y="9" width="1" height="1" fill="#ff0000"/><rect x="11" y="10" width="1" height="1" fill="#000"/><rect x="12" y="9" width="1" height="1" fill="#000"/><rect x="12" y="10" width="1" height="1" fill="#ff0000"/><rect x="13" y="9" width="1" height="1" fill="#ff0000"/><rect x="13" y="10" width="1" height="1" fill="#000"/><rect x="13" y="8" width="1" height="1" fill="#000"/><rect x="14" y="8" width="1" height="1" fill="#ff0000"/><rect x="14" y="7" width="1" height="1" fill="#000"/><rect x="9" y="21" width="1" height="1" fill="#ffff00"/><rect x="10" y="20" width="1" height="1" fill="#ffffff"/><rect x="11" y="19" width="1" height="1" fill="#ffff00"/><rect x="12" y="18" width="1" height="1" fill="#ffffff"/><rect x="13" y="17" width="1" height="1" fill="#ffff00"/><rect x="14" y="17" width="1" height="1" fill="#ffffff"/><rect x="15" y="16" width="1" height="1" fill="#ffff00"/><rect x="16" y="15" width="1" height="1" fill="#ffffff"/><rect x="17" y="14" width="1" height="1" fill="#ffff00"/><rect x="18" y="13" width="1" height="1" fill="#ffffff"/><rect x="19" y="12" width="1" height="1" fill="#ffff00"/><rect x="21" y="6" width="1" height="1" fill="#000"/><rect x="20" y="7" width="1" height="1" fill="#000"/><rect x="19" y="8" width="1" height="1" fill="#000"/><rect x="18" y="9" width="1" height="1" fill="#000"/><rect x="18" y="10" width="1" height="1" fill="#000"/><rect x="19" y="11" width="1" height="1" fill="#000"/><rect x="20" y="12" width="1" height="1" fill="#000"/><rect x="21" y="13" width="1" height="1" fill="#000"/><rect x="22" y="6" width="1" height="1" fill="#000"/><rect x="22" y="13" width="1" height="1" fill="#000"/><rect x="20" y="8" width="1" height="4" fill="#808080"/><rect x="21" y="7" width="1" height="6" fill="#808080"/><rect x="22" y="7" width="1" height="6" fill="#808080"/><rect x="6" y="31" width="1" height="1" fill="#000080"/><rect x="7" y="31" width="1" height="1" fill="#0000ff"/><rect x="8" y="31" width="1" height="1" fill="#000080"/><rect x="9" y="31" width="1" height="1" fill="#0000ff"/><rect x="10" y="31" width="1" height="1" fill="#000080"/><rect x="11" y="31" width="1" height="1" fill="#0000ff"/><rect x="12" y="31" width="1" height="1" fill="#000080"/><rect x="13" y="31" width="1" height="1" fill="#0000ff"/><rect x="14" y="32" width="1" height="1" fill="#0000ff"/><rect x="15" y="33" width="1" height="1" fill="#000080"/><rect x="16" y="34" width="1" height="1" fill="#0000ff"/><rect x="16" y="35" width="1" height="1" fill="#000080"/><rect x="17" y="35" width="1" height="1" fill="#0000ff"/><rect x="18" y="35" width="1" height="1" fill="#000080"/><rect x="19" y="35" width="1" height="1" fill="#0000ff"/><rect x="20" y="35" width="1" height="1" fill="#000080"/><rect x="21" y="35" width="1" height="1" fill="#0000ff"/><rect x="22" y="35" width="1" height="1" fill="#000080"/><rect x="6" y="35" width="1" height="1" fill="#000080"/><rect x="7" y="35" width="1" height="1" fill="#0000ff"/><rect x="8" y="35" width="1" height="1" fill="#000080"/><rect x="9" y="35" width="1" height="1" fill="#0000ff"/><rect x="10" y="35" width="1" height="1" fill="#000080"/><rect x="11" y="35" width="1" height="1" fill="#0000ff"/><rect x="12" y="35" width="1" height="1" fill="#000080"/><rect x="13" y="35" width="1" height="1" fill="#0000ff"/><rect x="14" y="36" width="1" height="1" fill="#0000ff"/><rect x="15" y="37" width="1" height="1" fill="#000080"/><rect x="16" y="38" width="1" height="1" fill="#0000ff"/><rect x="16" y="39" width="1" height="1" fill="#000080"/><rect x="17" y="39" width="1" height="1" fill="#0000ff"/><rect x="18" y="39" width="1" height="1" fill="#000080"/><rect x="19" y="39" width="1" height="1" fill="#0000ff"/><rect x="20" y="39" width="1" height="1" fill="#000080"/><rect x="21" y="39" width="1" height="1" fill="#0000ff"/><rect x="22" y="39" width="1" height="1" fill="#000080"/></g>
<!-- pad rel y 54..64 -->
<g shape-rendering="crispEdges"><rect x="12" y="54" width="4" height="1" fill="#000"/><rect x="11" y="55" width="6" height="1" fill="#000"/><rect x="10" y="56" width="8" height="1" fill="#000"/><rect x="9" y="57" width="10" height="1" fill="#000"/><rect x="9" y="58" width="10" height="1" fill="#000"/><rect x="9" y="59" width="10" height="1" fill="#000"/><rect x="9" y="60" width="10" height="1" fill="#000"/><rect x="10" y="61" width="8" height="1" fill="#000"/><rect x="11" y="62" width="6" height="1" fill="#000"/><rect x="12" y="63" width="4" height="1" fill="#000"/><rect x="12" y="55" width="4" height="1" fill="#a0a0a0"/><rect x="11" y="56" width="6" height="1" fill="#a0a0a0"/><rect x="10" y="57" width="8" height="1" fill="#a0a0a0"/><rect x="10" y="58" width="8" height="1" fill="#a0a0a0"/><rect x="10" y="59" width="8" height="1" fill="#a0a0a0"/><rect x="10" y="60" width="8" height="1" fill="#a0a0a0"/><rect x="11" y="61" width="6" height="1" fill="#a0a0a0"/><rect x="12" y="62" width="4" height="1" fill="#a0a0a0"/><rect x="13" y="57" width="2" height="1" fill="#0000ff"/><rect x="12" y="58" width="4" height="1" fill="#0000ff"/><rect x="12" y="59" width="4" height="1" fill="#0000ff"/><rect x="13" y="60" width="2" height="1" fill="#0000ff"/></g>
<!-- via + T -->
<g shape-rendering="crispEdges"><rect x="14" y="76" width="1" height="1" fill="#000"/><rect x="15" y="76" width="1" height="1" fill="#0000ff"/><rect x="16" y="76" width="1" height="1" fill="#000"/><rect x="17" y="76" width="1" height="1" fill="#0000ff"/><rect x="18" y="76" width="1" height="1" fill="#000"/><rect x="19" y="76" width="1" height="1" fill="#0000ff"/><rect x="20" y="76" width="1" height="1" fill="#000"/><rect x="21" y="76" width="1" height="1" fill="#0000ff"/><rect x="14" y="77" width="1" height="1" fill="#0000ff"/><rect x="15" y="77" width="1" height="1" fill="#000"/><rect x="16" y="77" width="1" height="1" fill="#0000ff"/><rect x="17" y="77" width="1" height="1" fill="#000"/><rect x="18" y="77" width="1" height="1" fill="#0000ff"/><rect x="19" y="77" width="1" height="1" fill="#000"/><rect x="20" y="77" width="1" height="1" fill="#0000ff"/><rect x="21" y="77" width="1" height="1" fill="#000"/><rect x="14" y="78" width="1" height="1" fill="#000"/><rect x="15" y="78" width="1" height="1" fill="#0000ff"/><rect x="16" y="78" width="1" height="1" fill="#000"/><rect x="17" y="78" width="1" height="1" fill="#0000ff"/><rect x="18" y="78" width="1" height="1" fill="#000"/><rect x="19" y="78" width="1" height="1" fill="#0000ff"/><rect x="20" y="78" width="1" height="1" fill="#000"/><rect x="21" y="78" width="1" height="1" fill="#0000ff"/><rect x="10" y="81" width="1" height="1" fill="#ff0000"/><rect x="11" y="81" width="1" height="1" fill="#000"/><rect x="12" y="81" width="1" height="1" fill="#ff0000"/><rect x="10" y="82" width="1" height="1" fill="#000"/><rect x="11" y="82" width="1" height="1" fill="#ff0000"/><rect x="12" y="82" width="1" height="1" fill="#000"/><rect x="10" y="83" width="1" height="1" fill="#ff0000"/><rect x="11" y="83" width="1" height="1" fill="#000"/><rect x="12" y="83" width="1" height="1" fill="#ff0000"/><rect x="10" y="84" width="1" height="1" fill="#000"/><rect x="11" y="84" width="1" height="1" fill="#ff0000"/><rect x="12" y="84" width="1" height="1" fill="#000"/><rect x="10" y="85" width="1" height="1" fill="#ff0000"/><rect x="11" y="85" width="1" height="1" fill="#000"/><rect x="12" y="85" width="1" height="1" fill="#ff0000"/><rect x="10" y="86" width="1" height="1" fill="#000"/><rect x="11" y="86" width="1" height="1" fill="#ff0000"/><rect x="12" y="86" width="1" height="1" fill="#000"/><rect x="10" y="87" width="1" height="1" fill="#ff0000"/><rect x="11" y="87" width="1" height="1" fill="#000"/><rect x="12" y="87" width="1" height="1" fill="#ff0000"/><rect x="11" y="73" width="1" height="1" fill="#000"/><rect x="10" y="74" width="3" height="1" fill="#000"/><rect x="9" y="75" width="5" height="1" fill="#000"/><rect x="8" y="76" width="7" height="1" fill="#000"/><rect x="7" y="77" width="9" height="1" fill="#000"/><rect x="8" y="78" width="7" height="1" fill="#000"/><rect x="9" y="79" width="5" height="1" fill="#000"/><rect x="10" y="80" width="3" height="1" fill="#000"/><rect x="11" y="81" width="1" height="1" fill="#000"/><rect x="11" y="75" width="1" height="1" fill="#909090"/><rect x="10" y="76" width="3" height="1" fill="#909090"/><rect x="9" y="77" width="5" height="1" fill="#909090"/><rect x="10" y="78" width="3" height="1" fill="#909090"/><rect x="11" y="79" width="1" height="1" fill="#909090"/><rect x="9" y="98" width="12" height="1" fill="#fff"/><rect x="21" y="97" width="1" height="3" fill="#fff"/><rect x="15" y="99" width="1" height="8" fill="#fff"/><rect x="12" y="108" width="6" height="1" fill="#fff"/><rect x="17" y="107" width="1" height="1" fill="#fff"/><rect x="8" y="96" width="13" height="2" fill="#000"/><rect x="8" y="98" width="1" height="2" fill="#000"/><rect x="9" y="98" width="1" height="1" fill="#000"/><rect x="19" y="98" width="1" height="1" fill="#000"/><rect x="20" y="98" width="1" height="2" fill="#000"/><rect x="13" y="98" width="2" height="9" fill="#000"/><rect x="11" y="107" width="6" height="1" fill="#000"/><rect x="12" y="106" width="4" height="1" fill="#000"/></g>
<!-- +10,10 -->
<g fill="#000" shape-rendering="crispEdges"><rect x="5" y="127" width="5" height="1"/><rect x="7" y="125" width="1" height="5"/><rect x="10" y="121" width="1" height="5"/><rect x="9" y="122" width="1" height="1"/><rect x="12" y="121" width="4" height="1"/><rect x="12" y="125" width="4" height="1"/><rect x="12" y="121" width="1" height="5"/><rect x="15" y="121" width="1" height="5"/><rect x="17" y="124" width="1" height="2"/><rect x="16" y="126" width="1" height="1"/><rect x="19" y="121" width="1" height="5"/><rect x="18" y="122" width="1" height="1"/><rect x="21" y="121" width="3" height="1"/><rect x="21" y="125" width="3" height="1"/><rect x="21" y="121" width="1" height="5"/><rect x="23" y="121" width="1" height="5"/><rect x="6" y="152" width="2" height="2"/><rect x="20" y="139" width="2" height="2"/></g>
<g stroke="#000" stroke-width="1" fill="none" transform="translate(-996,-76)">
<path d="M1004 228.5L1007 225.5M1014 218.5L1016.5 216"/>
<path d="M1010 219.5L1013.5 223L1010.5 226L1007 222.5Z"/>
<path d="M1006.5 223.5L1009.5 227"/>
</g>
<!-- X dotted circle rel y 160..174 -->
<g fill="#000" shape-rendering="crispEdges">
<rect x="11" y="161" width="1" height="1"/><rect x="13" y="161" width="1" height="1"/><rect x="15" y="161" width="1" height="1"/>
<rect x="9" y="162" width="1" height="1"/><rect x="17" y="162" width="1" height="1"/>
<rect x="8" y="164" width="1" height="1"/><rect x="18" y="164" width="1" height="1"/>
<rect x="8" y="166" width="1" height="1"/><rect x="18" y="166" width="1" height="1"/>
<rect x="8" y="168" width="1" height="1"/><rect x="18" y="168" width="1" height="1"/>
<rect x="8" y="170" width="1" height="1"/><rect x="18" y="170" width="1" height="1"/>
<rect x="9" y="172" width="1" height="1"/><rect x="17" y="172" width="1" height="1"/>
<rect x="11" y="173" width="1" height="1"/><rect x="13" y="173" width="1" height="1"/><rect x="15" y="173" width="1" height="1"/>
<rect x="7" y="161" width="1" height="1"/><rect x="19" y="161" width="1" height="1"/>
<rect x="10" y="164" width="1" height="1"/><rect x="16" y="164" width="1" height="1"/>
<rect x="11" y="165" width="1" height="1"/><rect x="15" y="165" width="1" height="1"/>
<rect x="12" y="166" width="3" height="3"/>
<rect x="11" y="169" width="1" height="1"/><rect x="15" y="169" width="1" height="1"/>
<rect x="10" y="170" width="1" height="1"/><rect x="16" y="170" width="1" height="1"/>
<rect x="7" y="173" width="1" height="1"/><rect x="19" y="173" width="1" height="1"/>
</g>
<!-- hatched box rel y 182..198 -->
<rect x="6.5" y="182.5" width="15" height="15" fill="#c8c8c8" stroke="#808080" stroke-width="1.2"/>
<path d="M7 188l5-5M7 193l10-10M8 197l13-14M13 197l8-9M18 197l3-3" stroke="#707070" stroke-width="0.9"/>
<!-- IC rel y 217..230 -->
<g shape-rendering="crispEdges"><rect x="18" y="218" width="1" height="12" fill="#808080"/><rect x="11" y="229" width="8" height="1" fill="#808080"/><rect x="10" y="217" width="1" height="1" fill="#ffff00"/><rect x="10" y="228" width="1" height="1" fill="#ffff00"/><rect x="11" y="217" width="1" height="1" fill="#fff"/><rect x="11" y="228" width="1" height="1" fill="#fff"/><rect x="12" y="217" width="1" height="1" fill="#ffff00"/><rect x="12" y="228" width="1" height="1" fill="#ffff00"/><rect x="13" y="217" width="1" height="1" fill="#fff"/><rect x="13" y="228" width="1" height="1" fill="#fff"/><rect x="14" y="217" width="1" height="1" fill="#ffff00"/><rect x="14" y="228" width="1" height="1" fill="#ffff00"/><rect x="15" y="217" width="1" height="1" fill="#fff"/><rect x="15" y="228" width="1" height="1" fill="#fff"/><rect x="16" y="217" width="1" height="1" fill="#ffff00"/><rect x="16" y="228" width="1" height="1" fill="#ffff00"/><rect x="17" y="217" width="1" height="1" fill="#fff"/><rect x="17" y="228" width="1" height="1" fill="#fff"/><rect x="10" y="217" width="1" height="1" fill="#ffff00"/><rect x="17" y="217" width="1" height="1" fill="#ffff00"/><rect x="10" y="218" width="1" height="1" fill="#fff"/><rect x="17" y="218" width="1" height="1" fill="#fff"/><rect x="10" y="219" width="1" height="1" fill="#ffff00"/><rect x="17" y="219" width="1" height="1" fill="#ffff00"/><rect x="10" y="220" width="1" height="1" fill="#fff"/><rect x="17" y="220" width="1" height="1" fill="#fff"/><rect x="10" y="221" width="1" height="1" fill="#ffff00"/><rect x="17" y="221" width="1" height="1" fill="#ffff00"/><rect x="10" y="222" width="1" height="1" fill="#fff"/><rect x="17" y="222" width="1" height="1" fill="#fff"/><rect x="10" y="223" width="1" height="1" fill="#ffff00"/><rect x="17" y="223" width="1" height="1" fill="#ffff00"/><rect x="10" y="224" width="1" height="1" fill="#fff"/><rect x="17" y="224" width="1" height="1" fill="#fff"/><rect x="10" y="225" width="1" height="1" fill="#ffff00"/><rect x="17" y="225" width="1" height="1" fill="#ffff00"/><rect x="10" y="226" width="1" height="1" fill="#fff"/><rect x="17" y="226" width="1" height="1" fill="#fff"/><rect x="10" y="227" width="1" height="1" fill="#ffff00"/><rect x="17" y="227" width="1" height="1" fill="#ffff00"/><rect x="10" y="228" width="1" height="1" fill="#fff"/><rect x="17" y="228" width="1" height="1" fill="#fff"/><rect x="13" y="218" width="2" height="1" fill="#000"/><rect x="7" y="218" width="2" height="2" fill="#000"/><rect x="19" y="218" width="2" height="2" fill="#000"/><rect x="7" y="221" width="2" height="2" fill="#000"/><rect x="19" y="221" width="2" height="2" fill="#000"/><rect x="7" y="224" width="2" height="2" fill="#000"/><rect x="19" y="224" width="2" height="2" fill="#000"/><rect x="7" y="227" width="2" height="2" fill="#000"/><rect x="19" y="227" width="2" height="2" fill="#000"/></g>
<!-- arcs -->
<g fill="none" stroke="#0000e0" stroke-width="1.2">
<path d="M7.8 252.2A8 8 0 1 1 21.5 246.5"/>
<path d="M7.8 274.7A8 8 0 1 1 21.5 269"/>
<path d="M7.8 296.2A8 8 0 1 1 21.5 290.5"/>
<circle cx="13.5" cy="312.5" r="8"/>
</g>
<g stroke="#000" fill="none" stroke-width="1">
<path d="M8.5 252.5h5M11 250v5"/><path d="M11 250l2-4M13.5 245.5l0.5-1" stroke-dasharray="1 1"/>
<path d="M11 269h5M13.5 266.5v5"/><path d="M8 276l4-6" stroke-dasharray="1 1"/>
<path d="M12.5 284v6l-3 4" stroke-dasharray="1 1"/>
<path d="M10 320l4-7" stroke-dasharray="1 1"/>
</g>
<g fill="#000" shape-rendering="crispEdges"><rect x="11" y="291" width="2" height="2"/><rect x="20" y="293" width="2" height="2"/><rect x="13" y="307" width="2" height="2"/></g>
<!-- yellow square rel y 327..340 -->
<g shape-rendering="crispEdges">
<rect x="7.5" y="327.5" width="14" height="13" fill="#e8e870" stroke="#000" stroke-width="1.5"/>
<path d="M6.5 361.5h14v-12h-3l-6 6h-5z" fill="#e8e870" stroke="#000" stroke-width="1.5" shape-rendering="auto"/>
<path d="M6.5 383.5h14v-12h-3l-6 6h-5z" fill="#e8e870" stroke="#000" stroke-width="1.5" shape-rendering="auto"/>
<rect x="6.5" y="371.5" width="6" height="4" fill="#e8e870" stroke="#000" stroke-width="1.5"/>
</g>
<!-- array -->
<g shape-rendering="crispEdges"><rect x="8" y="394" width="4" height="5" fill="#000"/><rect x="9" y="395" width="2" height="3" fill="#ffff00"/><rect x="7" y="396" width="1" height="1" fill="#000"/><rect x="13" y="394" width="4" height="5" fill="#000"/><rect x="14" y="395" width="2" height="3" fill="#ffff00"/><rect x="12" y="396" width="1" height="1" fill="#000"/><rect x="18" y="394" width="4" height="5" fill="#000"/><rect x="19" y="395" width="2" height="3" fill="#ffff00"/><rect x="17" y="396" width="1" height="1" fill="#000"/><rect x="8" y="401" width="4" height="5" fill="#000"/><rect x="9" y="402" width="2" height="3" fill="#ffff00"/><rect x="7" y="403" width="1" height="1" fill="#000"/><rect x="13" y="401" width="4" height="5" fill="#000"/><rect x="14" y="402" width="2" height="3" fill="#ffff00"/><rect x="12" y="403" width="1" height="1" fill="#000"/><rect x="18" y="401" width="4" height="5" fill="#000"/><rect x="19" y="402" width="2" height="3" fill="#ffff00"/><rect x="17" y="403" width="1" height="1" fill="#000"/></g>
</svg>

<!-- floating status toolbar -->
<div class="btn2" style="left:876px;top:710px;width:92px;height:25px"></div>
<div class="a" style="left:879px;top:713px;width:3px;height:19px;border-left:1px solid #fff;border-right:1px solid #808080;border-top:1px solid #fff;border-bottom:1px solid #808080"></div>
<div class="a" style="left:883px;top:713px;width:3px;height:19px;border-left:1px solid #fff;border-right:1px solid #808080;border-top:1px solid #fff;border-bottom:1px solid #808080"></div>
<div class="a" style="left:891px;top:716px;width:13px;height:13px;background:#fff;box-shadow:1px 1px #808080"></div>
<svg style="left:891px;top:716px" width="13" height="13" shape-rendering="crispEdges"><g fill="#0000ff"><rect x="6" y="1" width="1" height="2"/><rect x="5" y="3" width="1" height="2"/><rect x="7" y="3" width="1" height="2"/><rect x="4" y="5" width="1" height="3"/><rect x="8" y="5" width="1" height="3"/><rect x="4" y="7" width="5" height="1"/><rect x="3" y="8" width="1" height="3"/><rect x="9" y="8" width="1" height="3"/></g></svg>
<div class="a" style="left:911px;top:716px;width:14px;height:14px;background:#fff;border-right:1px solid #000;border-bottom:1px solid #000"></div>
<div class="a" style="left:913px;top:718px;width:5px;height:9px;background:#808080"></div>
<svg style="left:928px;top:717px" width="17" height="12" shape-rendering="crispEdges">
<rect x="0.5" y="0.5" width="16" height="11" fill="#c0c0c0" stroke="#909090"/>
<g fill="#fff"><rect x="1" y="2" width="2" height="2"/><rect x="4" y="2" width="2" height="2"/><rect x="7" y="2" width="2" height="2"/><rect x="10" y="2" width="2" height="2"/><rect x="13" y="2" width="2" height="2"/>
<rect x="2" y="5" width="2" height="2"/><rect x="5" y="5" width="2" height="2"/><rect x="8" y="5" width="2" height="2"/><rect x="11" y="5" width="2" height="2"/>
<rect x="3" y="8" width="10" height="2"/></g></svg>
<svg style="left:946px;top:714px" width="19" height="17" shape-rendering="auto">
<path d="M1 10L10 1l8 5-9 9z" fill="#800080" stroke="#400040" stroke-width="0.8"/>
<path d="M1 10l8 5v2l-8-5z" fill="#fff" stroke="#404040" stroke-width="0.6"/>
<path d="M9 15l9-9v2l-9 9z" fill="#c0c0c0" stroke="#404040" stroke-width="0.6"/>
<path d="M8 5.5q2-2 4-0.5t-2 3v1.5M10 11v1" fill="none" stroke="#ffff00" stroke-width="1.2"/>
</svg>
</body></html>
